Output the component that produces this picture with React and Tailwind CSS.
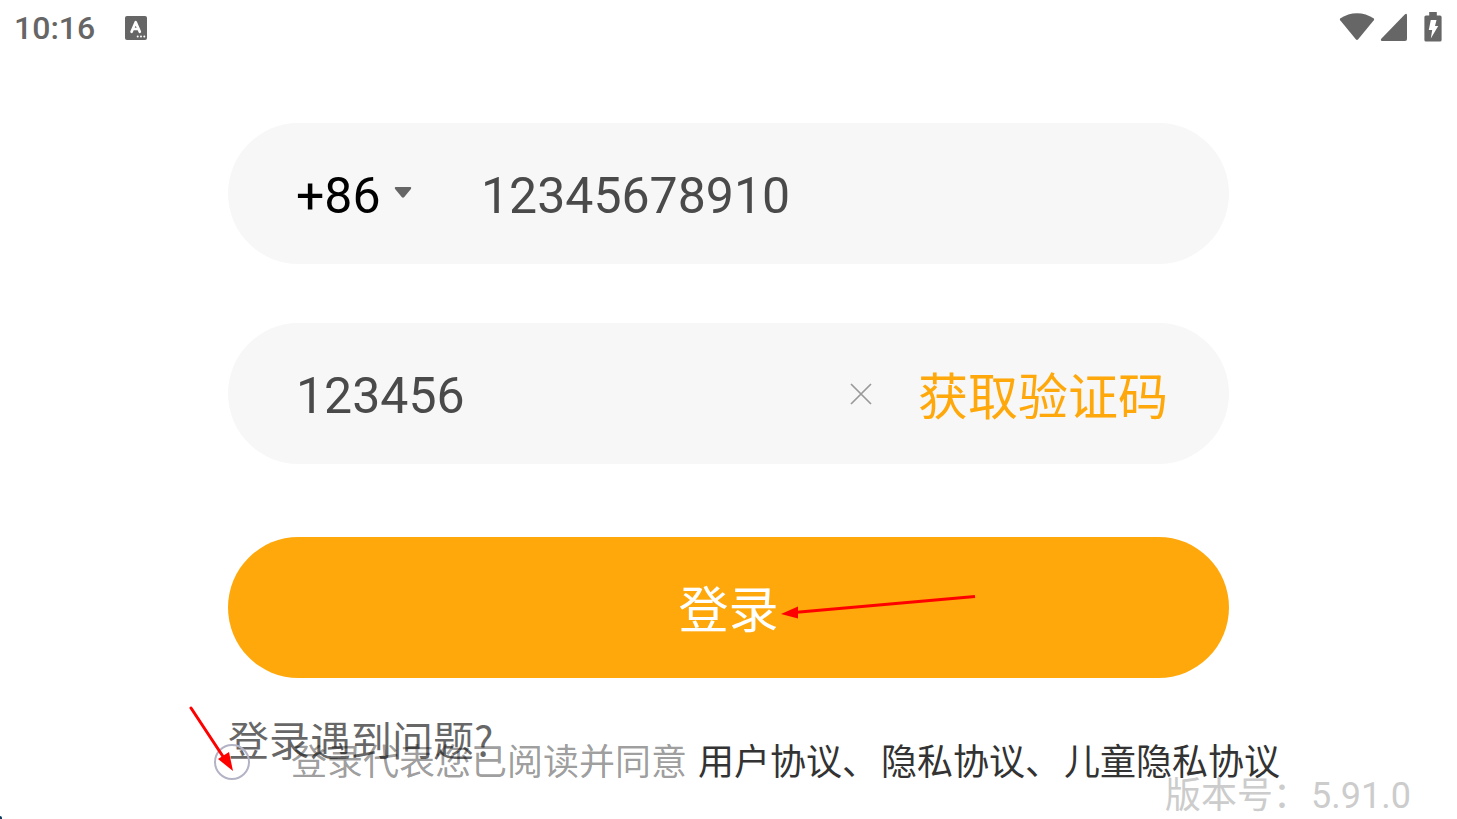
import { useState } from "react";

function StatusBar() {
  return (
    <header className="flex h-[56px] items-center justify-between pl-[14px] pr-[15px] text-[#666666]">
      <div className="flex items-center gap-[30px]">
        <time className="text-[32px] font-medium leading-[40px]">10:16</time>
        <svg width="22" height="24" viewBox="0 0 22 24" aria-hidden="true">
          <rect width="22" height="24" rx="2" fill="currentColor" />
          <path d="M6.600 15.800 10.700 6.200 14.800 15.800M8 13h5.600" fill="none" stroke="#fff" strokeWidth="2.700" strokeLinecap="round" strokeLinejoin="round" />
          <g fill="#fff">
            <circle cx="12.7" cy="20.5" r="1" />
            <circle cx="16" cy="20.5" r="1" />
            <circle cx="19.3" cy="20.5" r="1" />
          </g>
        </svg>
      </div>
      <div className="flex items-center pb-[2px]">
        <svg width="36" height="30" viewBox="0 0 36 30" aria-label="Wi-Fi">
          <path d="M1.2 8.2Q.4 7.1 1.5 6.3C11-.6 25-.6 34.5 6.3Q35.6 7.1 34.8 8.2L19.2 27.2Q18 28.6 16.8 27.2Z" fill="currentColor" />
        </svg>
        <svg className="ml-[5px]" width="28" height="30" viewBox="0 0 28 30" aria-label="Signal">
          <path d="M24.5 2.8Q27 .6 27 3.6V27Q27 29 25 29H2.2Q-.2 28.6 1.5 26.6Z" fill="currentColor" />
        </svg>
        <svg className="ml-[16px]" width="18" height="32" viewBox="0 0 18 32" aria-label="Charging">
          <path d="M5.2 1h7.6v3.4H16q1.6 0 1.6 1.6v23q0 1.6-1.6 1.6H2Q.4 30.600.4 29V6Q.4 4.400 2 4.400h3.200Z" fill="currentColor" />
          <path d="M6.800 9h5.700l-1.500 6h3.200L6.800 27.500 8.200 19H4.800Z" fill="#fff" />
        </svg>
      </div>
    </header>
  );
}

export default function App() {
  const [phone, setPhone] = useState("12345678910");
  const [code, setCode] = useState("123456");
  const [agreed, setAgreed] = useState(false);

  return (
    <div className="relative min-h-screen overflow-hidden bg-white font-[Roboto,'Noto_Sans_CJK_SC',sans-serif] text-[50px] leading-[60px]">
      <StatusBar />

      <form className="flex flex-col px-[228px] pt-[67px]" onSubmit={(e) => e.preventDefault()}>
        <div className="flex h-[141px] items-center rounded-full bg-[#f7f7f7] px-[68px]">
          <div className="relative flex w-[185px] shrink-0 items-center">
            <select aria-label="国家区号" className="w-[120px] appearance-none bg-transparent pt-[4px] text-black outline-none">
              <option>+86</option>
            </select>
            <svg className="pointer-events-none absolute left-[98px] top-[24px]" width="18" height="13" viewBox="0 0 18 13" aria-hidden="true">
              <path d="M1.500 1h15q1.400.5.4 1.900L10.300 11Q9 12.600 7.700 11L1.100 2.900Q.1 1.500 1.500 1Z" fill="#666" />
            </svg>
          </div>
          <input
            type="tel"
            aria-label="手机号"
            value={phone}
            onChange={(e) => setPhone(e.target.value)}
            className="min-w-0 flex-1 bg-transparent pt-[4px] text-[#4a4a4a] outline-none"
          />
        </div>

        <div className="mt-[59px] flex h-[141px] items-center rounded-full bg-[#f7f7f7] pl-[68px] pr-[61px]">
          <input
            type="text"
            inputMode="numeric"
            aria-label="验证码"
            value={code}
            onChange={(e) => setCode(e.target.value)}
            className="min-w-0 flex-1 bg-transparent pt-[4px] text-[#4a4a4a] outline-none"
          />
          <button type="button" aria-label="清除" onClick={() => setCode("")} className="mr-[46px] shrink-0">
            <svg width="22" height="22" viewBox="0 0 22 22" aria-hidden="true">
              <path d="m1 1 20 20M21 1 1 21" stroke="#999" strokeWidth="1.700" />
            </svg>
          </button>
          <button type="button" className="shrink-0 pt-[8px] text-[#ffa80b]">获取验证码</button>
        </div>

        <button type="submit" className="mt-[73px] flex h-[141px] items-center justify-center rounded-full bg-[#ffa80b] pt-[6px] text-white">
          <span className="relative">
            登录
            <svg className="absolute left-[101px] top-[11px]" width="198" height="32" viewBox="0 0 198 32" aria-hidden="true">
              <path d="M14 20.500 195 4.500" stroke="#f00" strokeWidth="3" />
              <path d="M1 22 18 14.500V26.500Z" fill="#f00" />
            </svg>
          </span>
        </button>

        <a href="#help" className="mt-[36px] self-start font-['Noto_Sans_CJK_SC',sans-serif] text-[41px] leading-[48px] text-black/60">
          登录遇到问题?
        </a>
      </form>

      <div className="absolute bottom-[32px] left-[214px] flex items-center whitespace-nowrap text-[36px] leading-[48px]">
        <span className="relative flex">
          <input
            id="agree"
            type="checkbox"
            checked={agreed}
            onChange={(e) => setAgreed(e.target.checked)}
            className="size-[36px] appearance-none rounded-full border-2 border-[#b3b3c6] checked:bg-[#ffa80b]"
          />
          <svg className="pointer-events-none absolute bottom-[8px] right-[16px]" width="46" height="66" viewBox="0 0 46 66" aria-hidden="true">
            <path d="M3 2 36 52" stroke="#f00" strokeWidth="3" strokeLinecap="round" />
            <path d="M45 65 30 53 41 46Z" fill="#f00" />
          </svg>
        </span>
        <label htmlFor="agree" className="ml-[41px] pt-[3px] text-black/40">登录代表您已阅读并同意</label>
        <span className="ml-[11px] flex gap-[3px] pt-[3px] text-[#333333]">
          <a href="#terms">用户协议、</a>
          <a href="#privacy">隐私协议、</a>
          <a href="#children">儿童隐私协议</a>
        </span>
      </div>

      <p className="absolute -bottom-[1px] right-[46px] text-[36px] leading-[48px] text-[#cccccc]">
        <span className="mr-[2px]">版本号：</span>5.91.0
      </p>
      <div className="absolute bottom-0 left-0 h-[3px] w-[2px] rounded-tr-full bg-[#0b3a5c]" />
    </div>
  );
}
